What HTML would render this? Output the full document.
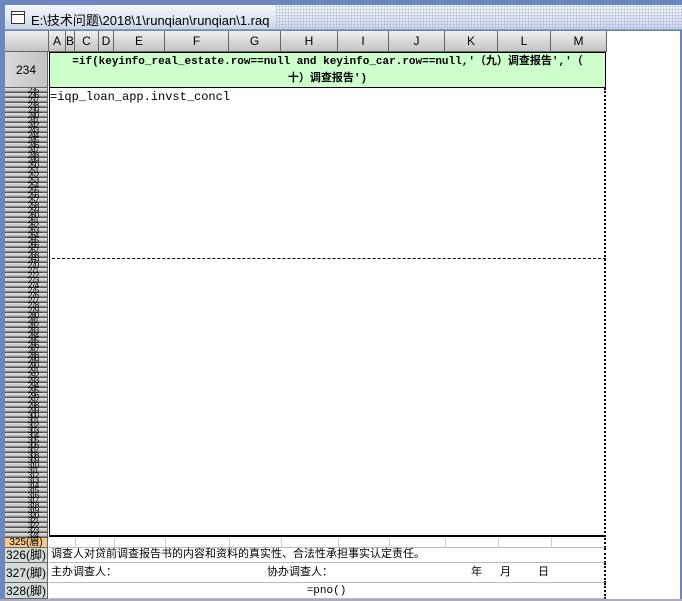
<!DOCTYPE html>
<html><head><meta charset="utf-8"><style>
*{margin:0;padding:0;box-sizing:border-box}
body{width:682px;height:601px;overflow:hidden;background:#6b86c0;position:relative;font-family:"Liberation Sans","Noto Sans CJK SC",sans-serif}
.title{position:absolute;left:5px;top:5px;width:677px;height:25px;background:radial-gradient(circle,#a9b8d6 0.7px,transparent 1px) 0 0/3px 3px,linear-gradient(#f4f6fa,#dfe6f1 60%,#c9d4e6);border-bottom:1px solid #8a9bbd}
.title span{position:absolute;left:0;top:0;height:24px;padding:5px 6px 0 26px;font-size:13px;color:#000;background:linear-gradient(#f4f6fa,#dfe6f1 60%,#c9d4e6)}
.ico{position:absolute;left:6px;top:6px;width:14px;height:13px;border:1px solid #333;background:#fff;z-index:2}
.ico:before{content:"";position:absolute;left:0;top:2px;width:12px;height:1px;background:#333}
.main{position:absolute;left:5px;top:31px;width:675px;height:568px;background:#fff}
.ch{position:absolute;top:31px;height:21px;background:linear-gradient(#efefef,#c4c4c4);border-right:1px solid #666;border-bottom:1px solid #666;font-size:12px;text-align:center;line-height:21px;color:#000}
.rh{position:absolute;left:5px;width:43px;background:linear-gradient(90deg,#d8d8d8,#c4c4c4);border-bottom:1px solid #666;border-right:1px solid #666;font-size:11px;text-align:center}
.tiny{position:absolute;left:5px;top:88px;width:43px;height:450px;background:repeating-linear-gradient(#e4e4e4 0,#c0c0c0 3px,#555 4px,#555 5px);border-right:1px solid #666;overflow:hidden}
.tiny div{height:5px;font-size:8px;line-height:5px;text-align:center;color:#000;letter-spacing:-1px;padding-left:14px}
.g234{position:absolute;left:49px;top:52px;width:557px;height:36px;background:#ccffcc;border:1px solid #000;font-family:"Liberation Mono","Noto Sans CJK SC",monospace;font-size:11px;font-weight:bold;text-align:center;line-height:17px;padding-top:1px}
.body{position:absolute;left:49px;top:88px;width:557px;height:449px;border-left:1px solid #000;border-bottom:2px solid #000;border-right:2px dotted #000}
.dash{position:absolute;left:52px;top:258px;width:554px;border-top:1px dashed #000}
.ft{position:absolute;left:49px;width:557px;border-bottom:1px solid #bbb;font-size:11px;font-family:"Liberation Mono","Noto Sans CJK SC",monospace;border-right:2px dotted #000}
.vl{position:absolute;top:538px;height:10px;border-left:1px solid #ccc}
</style></head><body>
<div class="title"><div class="ico"></div><span>E:\技术问题\2018\1\runqian\runqian\1.raq</span></div>
<div class="main"></div>
<div class="ch" style="left:5px;width:44px"></div>
<div class="ch" style="left:49px;width:17px">A</div>
<div class="ch" style="left:66px;width:9px">B</div>
<div class="ch" style="left:75px;width:24px">C</div>
<div class="ch" style="left:99px;width:15px">D</div>
<div class="ch" style="left:114px;width:51px">E</div>
<div class="ch" style="left:165px;width:64px">F</div>
<div class="ch" style="left:229px;width:52px">G</div>
<div class="ch" style="left:281px;width:57px">H</div>
<div class="ch" style="left:338px;width:51px">I</div>
<div class="ch" style="left:389px;width:56px">J</div>
<div class="ch" style="left:445px;width:53px">K</div>
<div class="ch" style="left:498px;width:53px">L</div>
<div class="ch" style="left:551px;width:56px">M</div>
<div class="rh" style="top:52px;height:36px;line-height:36px;font-size:12px">234</div>
<div class="tiny" id="t"></div>
<div class="g234">=if(keyinfo_real_estate.row==null and keyinfo_car.row==null,'（九）调查报告','（<br>十）调查报告')</div>
<div class="body"><div style="font-family:'Liberation Mono',monospace;font-size:12px;margin-top:2px">=iqp_loan_app.invst_concl</div></div>
<div class="dash"></div>
<div class="rh" style="top:538px;height:10px;line-height:10px;background:#f6c88c;font-size:10px">325(眉)</div>
<div class="rh" style="top:548px;height:15px;line-height:15px;font-size:12px;background:#d4dcd8">326(脚)</div>
<div class="rh" style="top:563px;height:20px;line-height:20px;font-size:12px;background:#d4dcd8">327(脚)</div>
<div class="rh" style="top:583px;height:16px;line-height:16px;font-size:12px;background:#d4dcd8">328(脚)</div>
<div class="ft" style="top:538px;height:10px"></div>
<div class="vl" style="left:75px"></div><div class="vl" style="left:99px"></div><div class="vl" style="left:114px"></div><div class="vl" style="left:165px"></div><div class="vl" style="left:229px"></div><div class="vl" style="left:281px"></div><div class="vl" style="left:338px"></div><div class="vl" style="left:389px"></div><div class="vl" style="left:445px"></div><div class="vl" style="left:498px"></div><div class="vl" style="left:551px"></div>
<div class="ft" style="top:548px;height:15px;line-height:14px;padding-left:2px">调查人对贷前调查报告书的内容和资料的真实性、合法性承担事实认定责任。</div>
<div class="ft" style="top:563px;height:20px;line-height:20px">
<span style="position:absolute;left:2px">主办调查人：</span><span style="position:absolute;left:218px">协办调查人：</span><span style="position:absolute;left:422px">年</span><span style="position:absolute;left:451px">月</span><span style="position:absolute;left:489px">日</span></div>
<div class="ft" style="top:583px;height:16px;line-height:16px;text-align:center">=pno()</div>
<div style="position:absolute;left:0;top:599px;width:682px;height:2px;background:#aab"></div>
<script>
var t=document.getElementById('t'),h='';for(var i=235;i<=324;i++)h+='<div>'+i+'</div>';t.innerHTML=h;
</script>
</body></html>
